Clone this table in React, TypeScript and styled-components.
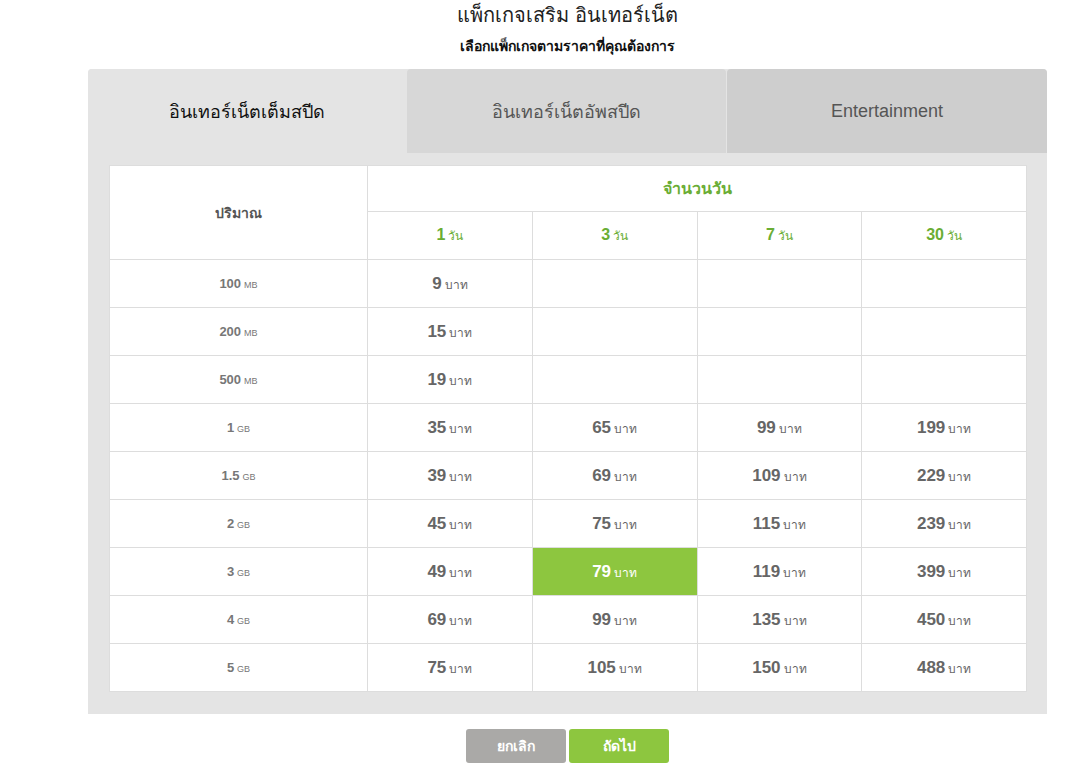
import React, {useState} from 'react';
import styled, {createGlobalStyle} from 'styled-components'

const GlobalStyle = createGlobalStyle`
  body {
    margin: 0;
    background: #fff;
    font-family: "Liberation Sans", "Noto Sans", Arial, sans-serif;
  }
`

const Page = styled.div`
  width: 959px;
  margin-left: 88px;
  display: flex;
  flex-direction: column;
  align-items: center;
`

const Title = styled.h1`
  margin: 0;
  height: 32px;
  line-height: 30px;
  font-size: 20px;
  font-weight: normal;
  color: #222;
`

const SubTitle = styled.h2`
  margin: 0;
  height: 37px;
  line-height: 28px;
  font-size: 14px;
  font-weight: bold;
  color: #111;
`

const Panel = styled.div`
  width: 100%;
  background: #e4e4e4;
  border-radius: 4px 4px 0 0;
`

const Tabs = styled.div`
  display: grid;
  grid-template-columns: 318px 320px 321px;
  height: 84px;
`

const Tab = styled.button<{ $shade: string; $active?: boolean }>`
  border: none;
  border-radius: 4px 4px 0 0;
  margin-left: ${p => p.$active ? 0 : 1}px;
  background: ${p => p.$shade};
  color: ${p => p.$active ? '#111' : '#555'};
  font-family: inherit;
  font-size: 18px;
  cursor: pointer;
  padding: 0;
`

const Body = styled.div`
  padding: 12px 20px 22px 21px;
`

const Table = styled.table`
  width: 918px;
  border-collapse: collapse;
  background: #fff;
  table-layout: fixed;

  & td, & th {
    border: 1px solid #ddd;
    text-align: center;
    padding: 0;
  }
`

const SizeHead = styled.th`
  width: 257px;
  font-size: 14px;
  font-weight: bold;
  color: #555;
`

const GreenHead = styled.th<{ $h: number }>`
  height: ${p => p.$h}px;
  color: #6aad34;
  font-size: 16px;
  font-weight: bold;
`

const Small = styled.span<{ $size?: number }>`
  font-size: ${p => p.$size || 12}px;
  font-weight: normal;
  margin-left: 3px;
`

const SizeCell = styled.td`
  height: 47px;
  font-size: 13px;
  font-weight: bold;
  color: #777;
`

const PriceCell = styled.td<{ $on?: boolean }>`
  height: 47px;
  font-size: 17px;
  font-weight: bold;
  color: ${p => p.$on ? '#fff' : '#666'};
  background: ${p => p.$on ? '#8dc63f' : '#fff'};
  cursor: ${p => p.$on !== undefined ? 'pointer' : 'default'};
`

const Actions = styled.div`
  display: flex;
  gap: 3px;
  margin-top: 15px;
`

const Button = styled.button<{ $green?: boolean }>`
  width: 100px;
  height: 34px;
  border: none;
  border-radius: 3px;
  background: ${p => p.$green ? '#8dc63f' : '#aaa9a7'};
  color: #fff;
  font-family: inherit;
  font-size: 14px;
  font-weight: bold;
  cursor: pointer;
`

const days = [1, 3, 7, 30]

const rows: { size: string; unit: string; prices: (number | null)[] }[] = [
    {size: '100', unit: 'MB', prices: [9, null, null, null]},
    {size: '200', unit: 'MB', prices: [15, null, null, null]},
    {size: '500', unit: 'MB', prices: [19, null, null, null]},
    {size: '1', unit: 'GB', prices: [35, 65, 99, 199]},
    {size: '1.5', unit: 'GB', prices: [39, 69, 109, 229]},
    {size: '2', unit: 'GB', prices: [45, 75, 115, 239]},
    {size: '3', unit: 'GB', prices: [49, 79, 119, 399]},
    {size: '4', unit: 'GB', prices: [69, 99, 135, 450]},
    {size: '5', unit: 'GB', prices: [75, 105, 150, 488]},
]

const tabs = [
    {label: 'อินเทอร์เน็ตเต็มสปีด', shade: '#e4e4e4'},
    {label: 'อินเทอร์เน็ตอัพสปีด', shade: '#d7d7d7'},
    {label: 'Entertainment', shade: '#cecece'},
]

function App() {
    const [tab, setTab] = useState(0)
    const [picked, setPicked] = useState('6-1')

    return (
        <>
            <GlobalStyle/>
            <Page>
                <Title>แพ็กเกจเสริม อินเทอร์เน็ต</Title>
                <SubTitle>เลือกแพ็กเกจตามราคาที่คุณต้องการ</SubTitle>
                <Panel>
                    <Tabs>
                        {tabs.map((t, i) => (
                            <Tab key={t.label} $shade={i === tab ? '#e4e4e4' : t.shade} $active={i === tab}
                                 onClick={() => setTab(i)}>
                                {t.label}
                            </Tab>
                        ))}
                    </Tabs>
                    <Body>
                        <Table>
                            <thead>
                            <tr>
                                <SizeHead rowSpan={2}>ปริมาณ</SizeHead>
                                <GreenHead colSpan={4} $h={45}>จำนวนวัน</GreenHead>
                            </tr>
                            <tr>
                                {days.map(d => (
                                    <GreenHead key={d} $h={47}>{d}<Small>วัน</Small></GreenHead>
                                ))}
                            </tr>
                            </thead>
                            <tbody>
                            {rows.map((r, ri) => (
                                <tr key={r.size + r.unit}>
                                    <SizeCell>{r.size}<Small $size={9}>{r.unit}</Small></SizeCell>
                                    {r.prices.map((p, ci) => {
                                        const key = `${ri}-${ci}`
                                        return p === null
                                            ? <PriceCell key={key}/>
                                            : <PriceCell key={key} $on={picked === key}
                                                         onClick={() => setPicked(key)}>
                                                {p}<Small>บาท</Small>
                                            </PriceCell>
                                    })}
                                </tr>
                            ))}
                            </tbody>
                        </Table>
                    </Body>
                </Panel>
                <Actions>
                    <Button>ยกเลิก</Button>
                    <Button $green>ถัดไป</Button>
                </Actions>
            </Page>
        </>
    );
}

export default App;
